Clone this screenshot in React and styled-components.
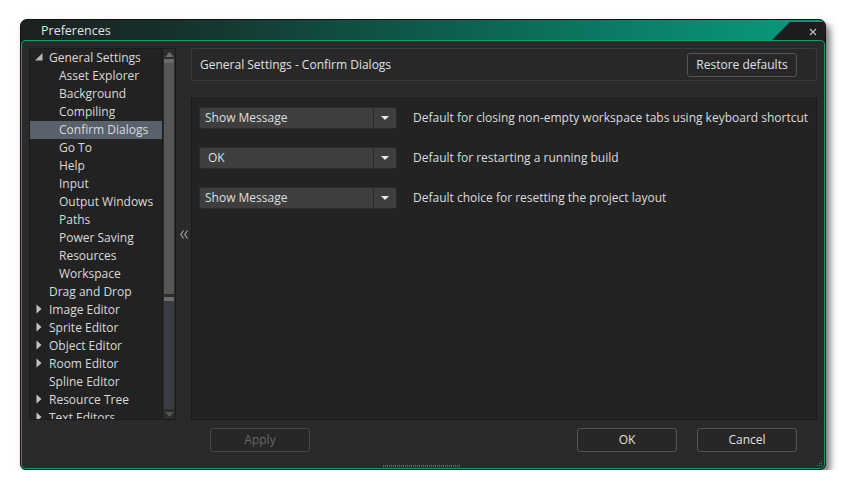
import React from "react";
import styled, { createGlobalStyle } from "styled-components";

const GlobalStyle = createGlobalStyle`
  body {
    margin: 0;
    background: #ffffff;
    font-family: "Open Sans", "DejaVu Sans", sans-serif;
  }
`;

const Page = styled.div`
  padding: 19px 0 0 20px;
`;

const Window = styled.div`
  width: 806px;
  height: 451px;
  box-sizing: border-box;
  border: 1px solid #141414;
  border-radius: 7px 7px 6px 6px;
  background: #161616;
  box-shadow: 4px 5px 7px rgba(0, 0, 0, 0.55);
  display: flex;
  flex-direction: column;
  overflow: hidden;
`;

const TitleBar = styled.div`
  height: 20px;
  flex: none;
  display: flex;
  align-items: center;
  padding-left: 20px;
  background: linear-gradient(
    to right,
    #1c2020 0%,
    #16302b 18%,
    #0e5a4c 50%,
    #0a8a70 85%,
    #089c7e 100%
  );
  color: #e2e2e2;
  font-size: 12.5px;
`;

const CloseTab = styled.div`
  margin-left: auto;
  width: 53px;
  height: 100%;
  background: #1d1d1d;
  clip-path: polygon(0 100%, 18px 2px, 100% 2px, 100% 100%);
  display: flex;
  align-items: center;
  justify-content: flex-end;
  padding: 3px 8px 0 0;
  box-sizing: border-box;
`;

const Body = styled.div`
  position: relative;
  flex: 1;
  border: 1px solid #10a062;
  border-radius: 4px;
  background: #2a2a2a;
  padding: 7px 7px 0;
  display: flex;
  flex-direction: column;
`;

const Main = styled.div`
  height: 372px;
  display: flex;
`;

const TreePanel = styled.div`
  width: 147px;
  flex: none;
  box-sizing: border-box;
  border: 1px solid #1b1b1b;
  background: #222222;
  display: flex;
`;

const TreeList = styled.div`
  flex: 1;
  overflow: hidden;
`;

const TreeRow = styled.div`
  height: 18px;
  box-sizing: border-box;
  padding-bottom: 2px;
  display: flex;
  align-items: center;
  padding-left: ${(p) => (p.$level === 1 ? 29 : 5)}px;
  background: ${(p) => (p.$selected ? "#59616d" : "transparent")};
  color: #dadada;
  font-size: 12px;
  white-space: nowrap;
`;

const Arrow = styled.span`
  width: 14px;
  display: flex;
  align-items: center;
  justify-content: flex-start;
  flex: none;
`;

const Scrollbar = styled.div`
  width: 13px;
  box-sizing: border-box;
  border-left: 1px solid #1a1a1a;
  background: #2d2d2d;
  display: flex;
  flex-direction: column;
  padding: 0 1px;
`;

const ScrollArrow = styled.div`
  height: 10px;
  flex: none;
  display: flex;
  align-items: center;
  justify-content: center;
`;

const Thumb = styled.div`
  height: 235px;
  flex: none;
  background: #575757;
  border-top: 4px solid #6a6a6a;
  box-sizing: border-box;
`;

const ThumbCap = styled.div`
  height: 4px;
  margin-top: 3px;
  flex: none;
  background: #6c6c6c;
`;

const Track = styled.div`
  flex: 1;
  background: #3a3e44;
`;

const Splitter = styled.div`
  width: 15px;
  flex: none;
  display: flex;
  align-items: center;
  justify-content: center;
`;

const RightCol = styled.div`
  flex: 1;
  min-width: 0;
  display: flex;
  flex-direction: column;
`;

const Header = styled.div`
  height: 33px;
  box-sizing: border-box;
  border: 1px solid #3a3a3a;
  border-radius: 2px;
  background: #282828;
  display: flex;
  align-items: center;
  padding: 0 19px 0 8px;
  color: #e0e0e0;
  font-size: 12px;
`;

const Content = styled.div`
  flex: 1;
  margin-top: 17px;
  border: 1px solid #1a1a1a;
  background: #232323;
  padding: 8px 7px;
  display: flex;
  flex-direction: column;
  gap: 18px;
`;

const Row = styled.div`
  display: flex;
  align-items: center;
  height: 22px;
`;

const Dropdown = styled.div`
  width: 198px;
  height: 22px;
  box-sizing: border-box;
  border: 1px solid #2c2c2c;
  border-radius: 2px;
  background: #3e3e3e;
  display: flex;
  flex: none;
`;

const DropValue = styled.div`
  flex: 1;
  display: flex;
  align-items: center;
  padding-left: ${(p) => p.$indent || 5}px;
  padding-bottom: 1px;
  color: #dedede;
  font-size: 12px;
`;

const DropArrow = styled.div`
  width: 22px;
  border-left: 1px solid #2a2a2a;
  display: flex;
  align-items: center;
  justify-content: center;
`;

const Label = styled.span`
  margin-left: 16px;
  margin-bottom: 1px;
  color: #dcdcdc;
  font-size: 12px;
  white-space: nowrap;
`;

const Footer = styled.div`
  margin-top: 8px;
  display: flex;
  gap: 20px;
  padding: 0 20px 0 181px;
`;

const Button = styled.button`
  width: ${(p) => p.$width || 100}px;
  height: 24px;
  flex: none;
  box-sizing: border-box;
  border: 1px solid ${(p) => (p.disabled ? "#474747" : "#555555")};
  border-radius: 3px;
  background: #272727;
  color: ${(p) => (p.disabled ? "#666666" : "#e0e0e0")};
  font-family: inherit;
  font-size: 12px;
  padding: 0 0 1px;
  margin-left: ${(p) => (p.$push ? "auto" : "0")};
`;

const Grip = styled.div`
  position: absolute;
  left: 361px;
  bottom: 1px;
  width: 77px;
  height: 2px;
  background-image: linear-gradient(90deg, #5e5e5e 50%, transparent 50%);
  background-size: 2px 2px;
`;

const CornerGrip = styled.svg`
  position: absolute;
  right: 1px;
  bottom: 1px;
`;

const tree = [
  { label: "General Settings", level: 0, arrow: "open" },
  { label: "Asset Explorer", level: 1 },
  { label: "Background", level: 1 },
  { label: "Compiling", level: 1 },
  { label: "Confirm Dialogs", level: 1, selected: true },
  { label: "Go To", level: 1 },
  { label: "Help", level: 1 },
  { label: "Input", level: 1 },
  { label: "Output Windows", level: 1 },
  { label: "Paths", level: 1 },
  { label: "Power Saving", level: 1 },
  { label: "Resources", level: 1 },
  { label: "Workspace", level: 1 },
  { label: "Drag and Drop", level: 0 },
  { label: "Image Editor", level: 0, arrow: "closed" },
  { label: "Sprite Editor", level: 0, arrow: "closed" },
  { label: "Object Editor", level: 0, arrow: "closed" },
  { label: "Room Editor", level: 0, arrow: "closed" },
  { label: "Spline Editor", level: 0 },
  { label: "Resource Tree", level: 0, arrow: "closed" },
  { label: "Text Editors", level: 0, arrow: "closed" },
];

const settings = [
  {
    value: "Show Message",
    label: "Default for closing non-empty workspace tabs using keyboard shortcut",
  },
  { value: "OK", label: "Default for restarting a running build", indent: 8 },
  { value: "Show Message", label: "Default choice for resetting the project layout" },
];

function TreeArrow({ kind }) {
  if (kind === "open") {
    return (
      <svg width="8" height="8" viewBox="0 0 8 8">
        <polygon points="0,7.5 7.5,7.5 7.5,0" fill="#b8b8b8" />
      </svg>
    );
  }
  if (kind === "closed") {
    return (
      <svg width="8" height="10" viewBox="0 0 8 10" style={{ marginLeft: 1 }}>
        <polygon points="0.5,0.5 5.5,5 0.5,9.5" fill="#c4c4c4" />
      </svg>
    );
  }
  return null;
}

export default function App() {
  return (
    <Page>
      <GlobalStyle />
      <Window>
        <TitleBar>
          Preferences
          <CloseTab>
            <svg width="8" height="8" viewBox="0 0 8 8">
              <path d="M1 1L7 7M7 1L1 7" stroke="#b8b8b8" strokeWidth="1.3" />
            </svg>
          </CloseTab>
        </TitleBar>
        <Body>
          <Main>
            <TreePanel>
              <TreeList>
                {tree.map((item) => (
                  <TreeRow key={item.label} $level={item.level} $selected={item.selected}>
                    {item.level === 0 && (
                      <Arrow>
                        <TreeArrow kind={item.arrow} />
                      </Arrow>
                    )}
                    {item.label}
                  </TreeRow>
                ))}
              </TreeList>
              <Scrollbar>
                <ScrollArrow>
                  <svg width="9" height="5" viewBox="0 0 9 5">
                    <polygon points="0,5 4.5,0 9,5" fill="#6a6a6a" />
                  </svg>
                </ScrollArrow>
                <Thumb />
                <ThumbCap />
                <Track />
                <ScrollArrow>
                  <svg width="9" height="5" viewBox="0 0 9 5">
                    <polygon points="0,0 4.5,5 9,0" fill="#555555" />
                  </svg>
                </ScrollArrow>
              </Scrollbar>
            </TreePanel>
            <Splitter>
              <svg width="8" height="9" viewBox="0 0 8 9">
                <path d="M3.5 0.5L0.8 4.5L3.5 8.5M7.5 0.5L4.8 4.5L7.5 8.5" stroke="#a0a0a0" strokeWidth="1.2" fill="none" />
              </svg>
            </Splitter>
            <RightCol>
              <Header>
                General Settings - Confirm Dialogs
                <Button $width={110} $push>
                  Restore defaults
                </Button>
              </Header>
              <Content>
                {settings.map((s) => (
                  <Row key={s.label}>
                    <Dropdown>
                      <DropValue $indent={s.indent}>{s.value}</DropValue>
                      <DropArrow>
                        <svg width="8" height="4" viewBox="0 0 8 4">
                          <polygon points="0,0 8,0 4,4" fill="#e8e8e8" />
                        </svg>
                      </DropArrow>
                    </Dropdown>
                    <Label>{s.label}</Label>
                  </Row>
                ))}
              </Content>
            </RightCol>
          </Main>
          <Footer>
            <Button disabled>Apply</Button>
            <Button $push>OK</Button>
            <Button>Cancel</Button>
          </Footer>
          <Grip />
          <CornerGrip width="7" height="7" viewBox="0 0 7 7">
            <rect x="5" y="1" width="1" height="1" fill="#6a6a6a" />
            <rect x="3" y="3" width="1" height="1" fill="#6a6a6a" />
            <rect x="5" y="3" width="1" height="1" fill="#6a6a6a" />
            <rect x="1" y="5" width="1" height="1" fill="#6a6a6a" />
            <rect x="3" y="5" width="1" height="1" fill="#6a6a6a" />
            <rect x="5" y="5" width="1" height="1" fill="#6a6a6a" />
          </CornerGrip>
        </Body>
      </Window>
    </Page>
  );
}
